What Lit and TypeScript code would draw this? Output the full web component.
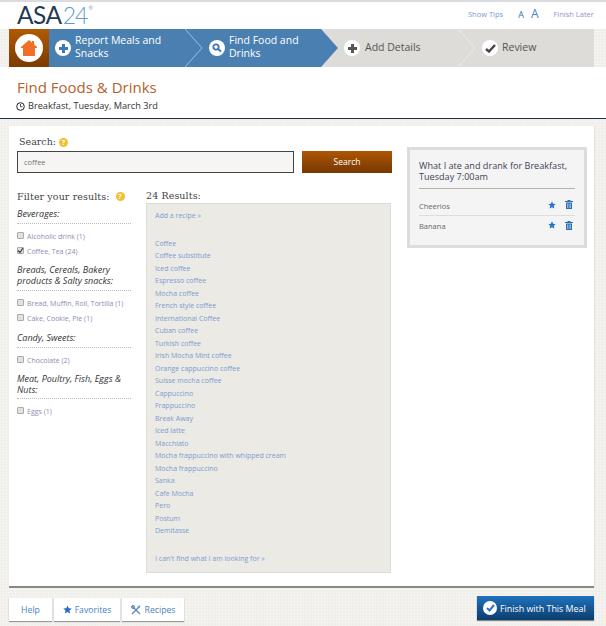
import { LitElement, html, css } from "lit";
import { customElement } from "lit/decorators.js";

const results = ["Coffee","Coffee substitute","Iced coffee","Espresso coffee","Mocha coffee","French style coffee","International Coffee","Cuban coffee","Turkish coffee","Irish Mocha Mint coffee","Orange cappuccino coffee","Suisse mocha coffee","Cappuccino","Frappuccino","Break Away","Iced latte","Macchiato","Mocha frappuccino with whipped cream","Mocha frappuccino","Sanka","Cafe Mocha","Pero","Postum","Demitasse"];
const filters = [
  { t: "Beverages:", items: [["Alcoholic drink (1)", false], ["Coffee, Tea (24)", true]] },
  { t: "Breads, Cereals, Bakery products & Salty snacks:", items: [["Bread, Muffin, Roll, Tortilla (1)", false], ["Cake, Cookie, Pie (1)", false]] },
  { t: "Candy, Sweets:", items: [["Chocolate (2)", false]] },
  { t: "Meat, Poultry, Fish, Eggs & Nuts:", items: [["Eggs (1)", false]] },
];

const star = (c: string, s: number) => html`<svg class="si" width=${s} height=${s} viewBox="0 0 24 24"><path fill=${c} d="M12 1l3.300 7.400 8 .8-6 5.400 1.800 7.900L12 18.400 4.900 22.500l1.800-7.900-6-5.400 8-.8z"/></svg>`;
const trash = html`<svg class="si" width="8" height="9" viewBox="0 0 8 9"><path fill="#2b6fb5" d="M0 1h8v1H0zM2.500 0h3v1h-3zM1 2.500h6V9H1z"/><path fill="#b9d0e8" d="M2.200 3.500h.7v4.500h-.7zM3.700 3.500h.7v4.500h-.7zM5.200 3.500h.7v4.500h-.7z"/></svg>`;
const tip = html`<span class="tip">?</span>`;

@customElement("app-root")
export class AppRoot extends LitElement {
  static styles = css`
    :host { display: block; width: 606px; height: 626px; overflow: hidden; font-family: "Open Sans", sans-serif; color: #444;
      background-color: #efeee9; background-image: repeating-linear-gradient(0deg, rgba(255,255,255,.25) 0 1px, transparent 1px 3px), repeating-linear-gradient(90deg, rgba(255,255,255,.25) 0 1px, transparent 1px 3px); }
    a { color: #7d9bd0; text-decoration: none; }
    .top { height: 27px; background: #fff; border-top: 2px solid #dcdce0; display: flex; align-items: center; padding-left: 17px; }
    .logo { font-family: "Lato", sans-serif; font-size: 24.500px; line-height: 27px; color: #1f3a52; letter-spacing: -0.500px; width: 451px; margin-top: -2px; }
    .logo span { color: #5d9bcf; font-weight: 300; font-size: 23px; letter-spacing: -1px; margin-left: 1px; }
    .logo sup { font-size: 6px; color: #9ab; vertical-align: 14px; line-height: 0; margin-left: 1px; }
    .tools { display: flex; align-items: center; font-size: 7.500px; margin-top: -3px; }
    .tools .a1 { color: #3d6fb0; font-size: 9px; margin-left: 15px; }
    .tools .a2 { color: #3d7fd0; font-size: 12px; margin-left: 7px; margin-top: -2px; }
    .tools .later { margin-left: 15px; color: #9a8fc8; }
    .nav { height: 38px; padding: 0 12px 0 9px; display: flex; font-size: 10.500px; line-height: 13px; }
    .home { width: 40px; background: linear-gradient(#b05a04, #7a3b02); display: flex; align-items: center; justify-content: center; }
    .homec { width: 28px; height: 28px; border-radius: 50%; background: #fff; display: flex; align-items: center; justify-content: center; }
    .step { position: relative; display: flex; align-items: center; color: #fff; box-sizing: border-box; }
    .step .tx { margin-top: -2px; }
    .blue { background: #4a7fb2; }
    .grey { background: #dddcd8; color: #555; }
    .s1 { width: 136px; padding-left: 6px; }
    .s2 { width: 136px; padding-left: 24px; }
    .s3 { width: 137px; padding-left: 23px; }
    .s4 { flex: 1; padding-left: 24px; }
    .ic { width: 16px; height: 16px; border-radius: 50%; background: #fff; display: flex; align-items: center; justify-content: center; margin-right: 4px; flex: none; }
    .s3 .ic { margin-right: 5px; }
    .chev { position: absolute; top: 0; right: -17px; z-index: 1; }
    .head { background: #fff; height: 51px; border-bottom: 1px solid #1c3048; padding-left: 17px; }
    h1 { margin: 0; padding-top: 11px; font-size: 15px; font-weight: 400; line-height: 18px; color: #b5622c; }
    .sub { display: flex; align-items: center; gap: 3px; font-size: 9.200px; color: #333; margin-top: 4px; line-height: 12px; margin-left: -1px; }
    .card { margin: 7px 12px 0 9px; height: 462px; box-sizing: border-box; background: #fff; border-bottom: 2px solid #888; padding: 8px 7px 0 8px; display: flex; box-shadow: 1px 0 0 #e3e2dd; }
    .left { width: 375px; margin-right: 15px; flex: none; }
    .slab { font-family: "DejaVu Serif", serif; color: #444; font-size: 9.500px; line-height: 12px; }
    .lab { display: flex; align-items: center; gap: 3px; padding-left: 2px; height: 14px; margin-top: 1px; }
    .tip { width: 9px; height: 9px; border-radius: 50%; background: #f0c030; color: #fff; font-size: 7px; line-height: 9px; text-align: center; font-family: "Open Sans", sans-serif; display: inline-block; font-weight: 700; }
    .sr { display: flex; gap: 8px; margin-top: 2px; }
    .inp { width: 277px; height: 22px; box-sizing: border-box; border: 1px solid #444; background: #f7f5f3; font-size: 7.500px; line-height: 20px; padding-left: 6px; color: #777; }
    .btn { width: 90px; height: 22px; background: linear-gradient(#ae5603, #763801); color: #fff; font-size: 8.500px; line-height: 22px; text-align: center; }
    .cols { display: flex; margin-top: 17px; }
    .fil { width: 114px; margin-right: 15px; }
    .fhead { display: flex; align-items: center; gap: 6px; height: 13px; letter-spacing: .1px; margin-bottom: 5px; }
    .cat { font-style: italic; font-size: 9px; line-height: 11px; color: #333; border-bottom: 1px dotted #bbb; padding-bottom: 4px; margin-bottom: 5px; }
    .chk { display: flex; align-items: center; height: 15px; font-size: 7px; color: #8d8db5; }
    .box { width: 5px; height: 5px; border: 1px solid #aaa; border-radius: 1px; background: #e2e2e2; margin-right: 3px; flex: none; display: flex; align-items: center; justify-content: center; margin-top: -3px; }
    .grp { margin-bottom: 5px; }
    .grp:nth-child(3) { margin-bottom: 6px; }
    .grp:nth-child(5) .cat { padding-bottom: 3px; }
    .res { width: 245px; }
    .rhead { height: 13px; letter-spacing: .1px; }
    .panel { height: 370px; box-sizing: border-box; background: #ebeae5; border: 1px solid #dddcd7; font-size: 7px; padding: 6px 8px; line-height: 12.520px; }
    .panel a { display: block; }
    .add { margin-bottom: 15px; }
    .cant { margin-top: 15px; }
    .side { width: 180px; height: 101px; margin-top: 13px; box-sizing: border-box; border: 3px solid #dddcd8; background: #f4f4f4; padding: 10px 9px 0; }
    .side h3 { margin: 0; font-size: 9.100px; line-height: 11px; font-weight: 400; color: #3c4456; padding-bottom: 6px; border-bottom: 1px solid #b5b3ab; }
    .rows { padding-top: 7px; }
    .row { display: flex; align-items: center; height: 20px; box-sizing: border-box; font-size: 7.500px; color: #666; border-bottom: 1px solid #ddd; gap: 9px; padding-right: 2px; }
    .row:last-child { border: 0; }
    .row span { flex: 1; }
    .row .si { margin-top: -2px; }
    .foot { display: flex; padding: 10px 12px 0 9px; gap: 2px; align-items: flex-start; }
    .fb { background: #fff; height: 23px; display: flex; align-items: center; justify-content: center; gap: 3px; font-size: 8.700px; color: #4a7fc0; box-shadow: 0 1px 1px #999; box-sizing: border-box; }
    .help { width: 43px; }
    .fav { width: 66px; }
    .rec { width: 62px; gap: 4px; }
    .finish { margin-left: auto; margin-top: -2px; width: 117px; height: 24px; background: linear-gradient(#1f72bd, #0c3d6e); color: #fff; font-size: 8.900px; display: flex; align-items: center; padding-left: 6px; box-sizing: border-box; gap: 3px; box-shadow: 0 1px 1px #888; }
    .fc { width: 14px; height: 14px; border-radius: 50%; background: #fff; display: flex; align-items: center; justify-content: center; }
    .chkmark { flex: none; }
  `;
  render() {
    const chev = (stroke: string, fill = "none") => html`<svg class="chev" width="17" height="38" viewBox="0 0 17 38"><path d="M0 0L17 19L0 38" fill=${fill} stroke=${stroke} stroke-width=${fill === "none" ? 0.7 : 0}/></svg>`;
    return html`
      <div class="top">
        <div class="logo">ASA<span>24</span><sup>®</sup></div>
        <div class="tools"><a>Show Tips</a><span class="a1">A</span><span class="a2">A</span><a class="later">Finish Later</a></div>
      </div>
      <div class="nav">
        <div class="home"><div class="homec"><svg width="18" height="18" viewBox="0 0 18 18"><path fill="#f07028" d="M9 1l3 2.500V2h2v3.200L17 8v1h-2v8H3V9H1V8z"/></svg></div></div>
        <div class="step blue s1"><div class="ic"><svg width="9" height="9" viewBox="0 0 9 9"><path fill="#3f78b5" d="M3 0h3v3h3v3H6v3H3V6H0V3h3z"/></svg></div><div class="tx">Report Meals and Snacks</div>${chev("#c9d8e8")}</div>
        <div class="step blue s2"><div class="ic"><svg width="10" height="10" viewBox="0 0 10 10"><circle cx="4" cy="4" r="2.700" fill="none" stroke="#3f78b5" stroke-width="1.800"/><path d="M6 6l3 2.500" stroke="#3f78b5" stroke-width="2"/></svg></div><div class="tx">Find Food and Drinks</div>${chev("none", "#4a7fb2")}</div>
        <div class="step grey s3"><div class="ic"><svg width="9" height="9" viewBox="0 0 9 9"><path fill="#555" d="M3 0h3v3h3v3H6v3H3V6H0V3h3z"/></svg></div><div class="tx">Add Details</div>${chev("#f4f4f2")}</div>
        <div class="step grey s4"><div class="ic"><svg width="11" height="9" viewBox="0 0 11 9"><path fill="none" stroke="#444" stroke-width="2.400" d="M1 5l3 2.500L10 1"/></svg></div><div class="tx">Review</div></div>
      </div>
      <div class="head">
        <h1>Find Foods &amp; Drinks</h1>
        <div class="sub"><svg width="9" height="9" viewBox="0 0 9 9"><circle cx="4.500" cy="4.500" r="3.800" fill="none" stroke="#222"/><path d="M4.500 2v2.700h2" fill="none" stroke="#222" stroke-width=".8"/></svg>Breakfast, Tuesday, March 3rd</div>
      </div>
      <div class="card">
        <div class="left">
          <div class="slab lab">Search: ${tip}</div>
          <div class="sr"><div class="inp">coffee</div><div class="btn">Search</div></div>
          <div class="cols">
            <div class="fil">
              <div class="slab fhead">Filter your results: ${tip}</div>
              ${filters.map(g => html`<div class="grp"><div class="cat">${g.t}</div>${g.items.map(i => html`<div class="chk"><span class="box">${i[1] ? html`<svg class="chkmark" width="7" height="7" viewBox="0 0 7 7"><path d="M1 3.500l2 2L6 1" fill="none" stroke="#444" stroke-width="1.300"/></svg>` : ""}</span>${i[0]}</div>`)}</div>`)}
            </div>
            <div class="res">
              <div class="slab rhead">24 Results:</div>
              <div class="panel">
                <a class="add">Add a recipe »</a>
                <div>${results.map(r => html`<a>${r}</a>`)}</div>
                <a class="cant">I can't find what I am looking for »</a>
              </div>
            </div>
          </div>
        </div>
        <div class="side">
          <h3>What I ate and drank for Breakfast, Tuesday 7:00am</h3>
          <div class="rows">
            <div class="row"><span>Cheerios</span>${star("#2b74c8", 8)}${trash}</div>
            <div class="row"><span>Banana</span>${star("#2b74c8", 8)}${trash}</div>
          </div>
        </div>
      </div>
      <div class="foot">
        <div class="fb help">Help</div>
        <div class="fb fav">${star("#2b6fc0", 9)}Favorites</div>
        <div class="fb rec"><svg width="10" height="10" viewBox="0 0 10 10"><path d="M1 1l8 8M9 1L1 9" stroke="#5a86b8" stroke-width="1.300"/><circle cx="2" cy="2" r="1.500" fill="none" stroke="#5a86b8"/><path d="M7 .5v2M8.500 .5v2" stroke="#5a86b8" stroke-width=".6"/></svg>Recipes</div>
        <div class="finish"><div class="fc"><svg width="9" height="8" viewBox="0 0 9 8"><path d="M1 4l2.500 2.500L8 1" fill="none" stroke="#2b74c8" stroke-width="2"/></svg></div>Finish with This Meal</div>
      </div>
    `;
  }
}
